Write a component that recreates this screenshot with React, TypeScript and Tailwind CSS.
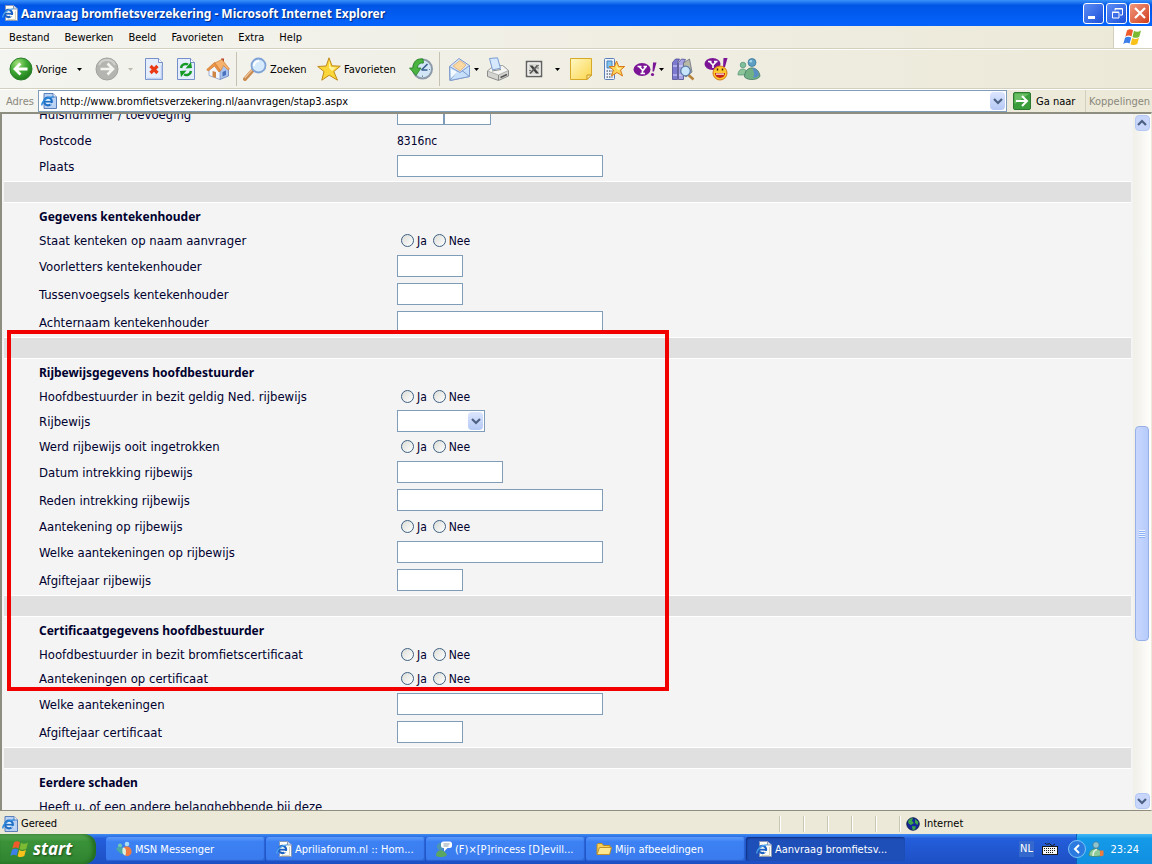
import React from "react";

type IconProps = { className?: string };

const IePage: React.FC<IconProps> = ({ className = "size-4" }) => (
  <svg viewBox="0 0 16 16" className={className} aria-hidden="true">
    <path d="M3.500 .5h8l4 3.500v11.500h-12z" fill="#fdfdf8" stroke="#8b98b5" />
    <path d="M11.500 .5v3.500h4" fill="#d6dff0" stroke="#8b98b5" />
    <path d="M13.500 6v8.500h-8" fill="none" stroke="#d9d4bd" />
    <circle cx="6.500" cy="8.500" r="3.600" fill="none" stroke="#1c62c4" strokeWidth="2.200" />
    <path d="M3.500 8.700h6.500" stroke="#1c62c4" strokeWidth="1.800" />
    <path d="M8 10h4v1.500H8z" fill="#fdfdf8" />
    <path d="M.8 12.500C.2 9 6 3.500 11.500 3.800" fill="none" stroke="#4fa3ea" strokeWidth="1.300" />
  </svg>
);

const IeBlue: React.FC<IconProps> = ({ className = "size-4" }) => (
  <svg viewBox="0 0 16 16" className={className} aria-hidden="true">
    <path d="M3 .5h9l3.500 3.500v11.500H3z" fill="#b9d2f4" stroke="#5a7fb8" />
    <path d="M12 .5V4h3.500" fill="#eef5ff" stroke="#5a7fb8" />
    <circle cx="7" cy="8.500" r="3.800" fill="#e4f1ff" stroke="#1f6fc4" strokeWidth="2.200" />
    <path d="M4 8.700h6.500" stroke="#1f6fc4" strokeWidth="1.700" />
    <path d="M9 10.200h3.500v1.300H9z" fill="#d5e6fb" />
    <path d="M.8 12.500C.5 8.500 6 3.500 12.500 4" fill="none" stroke="#2d8ade" strokeWidth="1.400" />
  </svg>
);

const WindowsFlag: React.FC<IconProps> = ({ className = "size-5" }) => (
  <svg viewBox="0 0 20 18" className={className} aria-hidden="true">
    <path d="M4 2.500C6 1 8 1 10 2.300L8.500 8.500C6.500 7.300 4.500 7.300 2.300 8.700z" fill="#ee5a2a" />
    <path d="M11 2.800c2 1.200 4.500 1.200 7-.3l-1.700 6.200c-2.300 1.500-4.800 1.500-6.800.3z" fill="#7cba34" />
    <path d="M2 9.800c2-1.400 4.200-1.400 6.200-.2L6.600 15.600C4.600 14.400 2.500 14.500.3 15.900z" fill="#3c7fe8" />
    <path d="M9.200 10.100c2 1.200 4.500 1.200 6.800-.3l-1.700 6.200c-2.300 1.500-4.700 1.400-6.700.2z" fill="#f8c11c" />
  </svg>
);

const BackIcon = () => (
  <svg viewBox="0 0 24 24" className="size-6 shrink-0" aria-hidden="true">
    <defs>
      <radialGradient id="back" cx="35%" cy="25%" r="80%">
        <stop offset="0" stopColor="#a4e07c" />
        <stop offset=".5" stopColor="#3fa935" />
        <stop offset="1" stopColor="#1c7a1b" />
      </radialGradient>
    </defs>
    <circle cx="12" cy="12" r="11" fill="url(#back)" stroke="#2b7f2a" />
    <path d="M11.500 6.500L6 12l5.500 5.500M6.500 12H18.500" fill="none" stroke="#fff" strokeWidth="2.800" />
  </svg>
);

const ForwardIcon = () => (
  <svg viewBox="0 0 24 24" className="size-6 shrink-0" aria-hidden="true">
    <circle cx="12" cy="12" r="11" fill="#b4b4b1" stroke="#a2a29e" />
    <path d="M4 8a9 9 0 0 1 16 0" fill="none" stroke="#d0d0cd" strokeWidth="2" />
    <path d="M12.500 6.500L18 12l-5.500 5.500M17.500 12H5.500" fill="none" stroke="#f4f4f0" strokeWidth="2.600" />
  </svg>
);

const StopIcon = () => (
  <svg viewBox="0 0 24 24" className="size-6" aria-hidden="true">
    <path d="M3.500 1.500h13l4 4v17h-17z" fill="#e5eefd" stroke="#7590c8" />
    <path d="M16.500 1.500v4h4" fill="#fff" stroke="#7590c8" />
    <path d="M19.500 8v13.500H5" fill="none" stroke="#bdd0f3" strokeWidth="1.500" />
    <path d="M8.500 9l7 7M15.500 9l-7 7" stroke="#ea3a16" strokeWidth="3.200" />
  </svg>
);

const RefreshIcon = () => (
  <svg viewBox="0 0 24 24" className="size-6" aria-hidden="true">
    <path d="M3.500 1.500h13l4 4v17h-17z" fill="#e5eefd" stroke="#7590c8" />
    <path d="M16.500 1.500v4h4" fill="#fff" stroke="#7590c8" />
    <path d="M7 11c.5-3.500 4-5 7-3.500" fill="none" stroke="#149a25" strokeWidth="2.500" />
    <path d="M11.500 11.500l6.500-.5-1-6z" fill="#149a25" />
    <path d="M17 14c-.5 3.500-4 5-7 3.500" fill="none" stroke="#149a25" strokeWidth="2.500" />
    <path d="M12.500 13.500l-6.500.5 1 6z" fill="#149a25" />
  </svg>
);

const HomeIcon = () => (
  <svg viewBox="0 0 24 24" className="size-6" aria-hidden="true">
    <path d="M15 1.500h3v7h-3z" fill="#b8452c" />
    <path d="M13 13l5-6 4.500 5v7L14 22.500z" fill="#a9c2ee" stroke="#6583bd" strokeWidth=".8" />
    <path d="M3 12.500L8.500 8l5.500 6v8.500L3 18.500z" fill="#f3f7ff" stroke="#8aa0cc" strokeWidth=".8" />
    <path d="M8.500 6L16 2.500l7.500 9.500-1.500 1-4.500-4.500L14.500 14z" fill="#f6b26c" stroke="#cf8136" strokeWidth=".7" />
    <path d="M.8 12.500L8.500 5.500l6 8.500-1.500 1L8.500 9 2.200 14z" fill="#ee9544" stroke="#c8742c" strokeWidth=".7" />
    <path d="M6.500 14l3.500 1v6L6.500 19.800z" fill="#cf8747" />
    <path d="M16.500 15l3.500-1.500v4.500l-3.500 1.500z" fill="#4871bd" />
  </svg>
);

const SearchIcon = () => (
  <svg viewBox="0 0 24 24" className="size-6 shrink-0" aria-hidden="true">
    <path d="M2 22l8-9" stroke="#c98a50" strokeWidth="4" strokeLinecap="round" />
    <path d="M1.800 21l7.500-8.500" stroke="#f0c193" strokeWidth="1.200" />
    <circle cx="15.500" cy="8.500" r="7" fill="#d5eafc" stroke="#7fa3d6" strokeWidth="1.800" />
    <path d="M11 9a4.800 4.800 0 0 1 5-5" fill="none" stroke="#fff" strokeWidth="2" />
  </svg>
);

const Star: React.FC<IconProps> = ({ className = "size-6 shrink-0" }) => (
  <svg viewBox="0 0 24 24" className={className} aria-hidden="true">
    <path d="M12 .8l3 8 8.300.4-6.500 5.300 3.700 8.700-8.300-5-7.400 5 2.200-8.700L.7 9.500 9.200 9z" fill="#fbd63a" stroke="#bf8a1a" />
    <path d="M12 4l1.800 6 5.500.5-4.500 3.500-2.800-3z" fill="#fff3a0" />
  </svg>
);

const HistoryIcon = () => (
  <svg viewBox="0 0 24 24" className="size-6" aria-hidden="true">
    <circle cx="13.500" cy="12" r="9.500" fill="#d2e6f5" stroke="#8d9aa8" strokeWidth="2" />
    <path d="M12.500 13l6-6M12.500 13h6" stroke="#395e8d" strokeWidth="1.600" />
    <path d="M13.500 5v1.500M20 12.500h1M13.500 18.500v1.500" stroke="#6f87a0" />
    <path d="M14 2C7.500 1 4 5 4 11H.5L7 18.500 12 11H8.500c0-3 2-5.500 6-5z" fill="#4bb33f" stroke="#237d24" strokeWidth=".8" />
  </svg>
);

const MailIcon = () => (
  <svg viewBox="0 0 24 24" className="size-6" aria-hidden="true">
    <path d="M1.500 9.500L11 1.500l10.500 7v11L2 23.500z" fill="#d6e5fa" stroke="#7f9bcb" />
    <path d="M5 9l7-5.500L18 8l-6 6z" fill="#fbd9a2" stroke="#dba76b" strokeWidth=".7" />
    <path d="M1.500 9.500L12 15.500l9.500-7v11L2 23.500z" fill="#c6e0fb" stroke="#7f9bcb" />
    <path d="M2 23l7.500-9M21.500 19.500L14 13.500" fill="none" stroke="#7f9bcb" />
    <path d="M3 12l6.500 3L3 21z" fill="#f2f9ff" />
  </svg>
);

const PrinterIcon = () => (
  <svg viewBox="0 0 24 24" className="size-6" aria-hidden="true">
    <path d="M1.500 14l5-4 10-1.500 6 5v5.500l-10 4.500-11-4z" fill="#d4d4d0" stroke="#8b8b8b" />
    <path d="M1.500 14l11 4 10-4.500-6-5-10 1.500z" fill="#f5f5f3" stroke="#9a9a9a" strokeWidth=".7" />
    <path d="M3.500 1.500L11.500 .8l3 10.500-8 1.500z" fill="#d6e8fd" stroke="#7a9cd0" />
    <path d="M6 14l9-1.500" stroke="#8b8b8b" />
    <path d="M12.500 18v5" stroke="#8b8b8b" />
    <path d="M14.500 20.500l6.500-3" stroke="#555" strokeWidth="1.500" />
  </svg>
);

const ExcelIcon = () => (
  <svg viewBox="0 0 24 24" className="size-6" aria-hidden="true">
    <rect x="4.500" y="4.500" width="15" height="15" fill="#d9d9d4" stroke="#626262" strokeWidth="1.500" />
    <path d="M6 6h12v12H6z" fill="none" stroke="#f7f7f4" />
    <path d="M7.500 8.500h3l6.500 8h-3z" fill="#3f3f3f" />
    <path d="M15.500 8.500L8 16.500" stroke="#5a5a5a" strokeWidth="1.800" />
    <path d="M14 8.500h3M14.500 11h2.500M7 13.500h2" stroke="#777" />
  </svg>
);

const NoteIcon = () => (
  <svg viewBox="0 0 24 24" className="size-6" aria-hidden="true">
    <defs>
      <linearGradient id="note" x1="0" y1="0" x2="1" y2="1">
        <stop offset="0" stopColor="#fff8c4" />
        <stop offset="1" stopColor="#fbd54c" />
      </linearGradient>
    </defs>
    <path d="M1.500 1.500h21V18L18 22.500H1.500z" fill="url(#note)" stroke="#d8a926" />
    <path d="M22.500 18H18v4.500z" fill="#fff0a0" stroke="#c8921c" />
  </svg>
);

const PhoneStarIcon = () => (
  <svg viewBox="0 0 24 24" className="size-6" aria-hidden="true">
    <rect x="2.500" y="1.500" width="10" height="21" rx="1" fill="#edf3fc" stroke="#5b7fb6" />
    <path d="M5 4h5v7H5z" fill="#7fc3ef" stroke="#4b82b8" />
    <path d="M4.500 14h6M4.500 17h6M4.500 20h6" stroke="#69727f" strokeWidth="1.500" strokeDasharray="1.500 1" />
    <path d="M14.500 4l2.200 5.500h6L18.500 13l2 6-5.500-3.500L9.500 19l2-6L7 9.500h5.500z" fill="#fcd65a" stroke="#d97a16" />
    <path d="M14.500 7l1.500 4 3.500.2-3 2-2-2z" fill="#fff3a8" />
  </svg>
);

const YahooIcon = () => (
  <svg viewBox="0 0 24 24" className="size-6" aria-hidden="true">
    <ellipse cx="9" cy="12.500" rx="8.500" ry="6.500" fill="#7b1595" />
    <path d="M4.500 9.500h4M10.500 9.500h3.500M6 9.500l4 4 3-4M9.500 13.500v3M7.500 16.500h4.500" fill="none" stroke="#fff" strokeWidth="1.700" />
    <path d="M20 5.500h3.500l-2.500 9h-1.500z" fill="#7b1595" />
    <circle cx="19.500" cy="17.500" r="1.600" fill="#7b1595" />
  </svg>
);

const BooksIcon = () => (
  <svg viewBox="0 0 24 24" className="size-6" aria-hidden="true">
    <path d="M1.500 5.500l3-3.500h4l-2 3.500v17h-5z" fill="#7d7bd0" stroke="#4c4a91" strokeWidth=".8" />
    <path d="M7.500 5.500L10.500 2l4 .5-2 3.500v16.500h-5z" fill="#a5a3e3" stroke="#4c4a91" strokeWidth=".8" />
    <path d="M12.500 6l6-4 2.500 13-6 5-2.500-2z" fill="#b9b9a8" stroke="#696f7d" strokeWidth=".8" />
    <path d="M2 9h4M2 18h4M8 9h4M8 18h4" stroke="#e0dcff" />
    <path d="M17.500 18l5 4.500" stroke="#b8823a" strokeWidth="2.500" />
    <circle cx="14.500" cy="14" r="4.800" fill="#c8e5fb" stroke="#5a7ca8" strokeWidth="1.300" />
  </svg>
);

const YahooMessengerIcon = () => (
  <svg viewBox="0 0 24 24" className="size-6" aria-hidden="true">
    <ellipse cx="8.500" cy="7" rx="8" ry="6" fill="#7b1595" />
    <path d="M4 4.500h3.500M10 4.500h3.500M5.500 4.500L9 8l3.500-3.500M9 8v3" fill="none" stroke="#fff" strokeWidth="1.600" />
    <path d="M19.500 1H23.500l-2.500 9h-2z" fill="#7b1595" />
    <circle cx="16" cy="16" r="7" fill="#fdc92c" stroke="#d5761a" />
    <path d="M11 16h10c0 6.500-10 6.500-10 0z" fill="#c82118" />
    <path d="M12 16.500h8v1.200h-8z" fill="#fff" />
    <path d="M13.500 11.500v2M18.500 11.500v2" stroke="#442200" strokeWidth="1.500" />
  </svg>
);

const PeopleIcon: React.FC<IconProps> = ({ className = "size-6" }) => (
  <svg viewBox="0 0 24 24" className={className} aria-hidden="true">
    <circle cx="6" cy="8" r="2.800" fill="#7fbf9a" stroke="#4e8e7a" strokeWidth=".7" />
    <path d="M1 18c0-8 9-8 10 0z" fill="#8cc59a" stroke="#528f72" strokeWidth=".7" />
    <circle cx="15" cy="5.500" r="4" fill="#5f9fc4" stroke="#34718f" strokeWidth=".7" />
    <path d="M7.500 20c0-12 14-12 15.500-1-1 4-12 5-15.500 1z" fill="#72b184" stroke="#39705c" strokeWidth=".7" />
    <path d="M15 11c4 0 6.500 3 7 7-2 3-5 3-6 2.500 2-3 1-6-1-9.500z" fill="#5b8fc4" />
    <circle cx="13.800" cy="4.300" r="1.300" fill="#a9d6ea" />
  </svg>
);

const TrayPersonIcon = () => (
  <svg viewBox="0 0 16 16" className="ml-[2px] size-4" aria-hidden="true">
    <circle cx="8" cy="4" r="3.200" fill="#8fc3cf" stroke="#3d7690" strokeWidth=".7" />
    <path d="M1 14.500C1 6 13 5.500 14 14c-3 2-10 2-13 .5z" fill="#8ecb9a" stroke="#3f7d63" strokeWidth=".7" />
    <path d="M5 15c0-4 1-6 4-6.500" fill="none" stroke="#e4f2e6" strokeWidth="1.500" />
    <path d="M12 9.500h3.500v5l-3.500 1z" fill="#ef7a3c" />
  </svg>
);

const MsnIcon: React.FC<IconProps> = ({ className = "size-4 shrink-0" }) => (
  <svg viewBox="0 0 16 16" className={className} aria-hidden="true">
    <circle cx="4" cy="4.500" r="2" fill="#73c9ad" />
    <path d="M0 8c2-3 5-3 8 0v5c-3 1-5-2-8-5z" fill="#48a7a9" />
    <circle cx="11" cy="3" r="2.300" fill="#a8dcf7" />
    <path d="M8 6c5-1.500 8 1 7.500 6-2 4-6 4-7.500 1z" fill="#ef7b42" />
    <path d="M7 6.500c3 0 3.500 3 2.500 8C6.500 14 5.500 10 7 6.500z" fill="#dceedd" />
  </svg>
);

const ChatIcon = () => (
  <svg viewBox="0 0 16 16" className="size-4 shrink-0" aria-hidden="true">
    <circle cx="4.500" cy="5.500" r="3.500" fill="#4f97ae" />
    <path d="M0 15c0-7 8-8 11-1-2 2.500-8 2.500-11 1z" fill="#5ba660" />
    <rect x="5" y=".5" width="11" height="6.500" rx="2.500" fill="#fff" />
    <path d="M8 6.500v4l4-4z" fill="#fff" />
    <path d="M7.500 3h6M7.500 5h5" stroke="#8b9ba8" />
  </svg>
);

const FolderIcon = () => (
  <svg viewBox="0 0 16 16" className="size-4 shrink-0" aria-hidden="true">
    <path d="M1 13V3.500l1-1h4l1.500 2H14V6" fill="#f8cf5a" stroke="#b98a20" />
    <path d="M1 13.500L3.500 6.500h12L13.500 13.500z" fill="#fde88f" stroke="#c0942b" />
  </svg>
);

const GlobeIcon = () => (
  <svg viewBox="0 0 14 14" className="size-[14px]" aria-hidden="true">
    <circle cx="7" cy="7" r="6.200" fill="#14279c" stroke="#0b1a4a" />
    <path d="M2 4c1.500-2 3-3 5-3L6 4 8 6 5 8 2.500 6.500zM9 2l3.500 3-1 3L9 6zM6 9l4 .5-1 3-2.500.5z" fill="#3ca549" />
  </svg>
);

const KeyboardIcon = () => (
  <svg viewBox="0 0 16 12" className="h-3 w-4" aria-hidden="true">
    <path d="M3 0q1 2 3 1t3 1 4-1" fill="none" stroke="#1a1a1a" />
    <rect x=".5" y="3.500" width="15" height="8" fill="#f4f4f4" stroke="#1a1a1a" />
    <path d="M2 5.500h12M2 7.500h12M4 9.500h8" stroke="#1a1a1a" strokeDasharray="1 1" />
  </svg>
);

const Chevron: React.FC<{ up?: boolean }> = ({ up }) => (
  <svg viewBox="0 0 10 8" className={up ? "h-2 w-[10px] rotate-180" : "h-2 w-[10px]"} aria-hidden="true">
    <path d="M1 2l4 4 4-4" fill="none" stroke="#4d6185" strokeWidth="2.200" />
  </svg>
);

const DropArrow: React.FC<{ className: string; label: string; muted?: boolean }> = ({
  className,
  label,
  muted,
}) => (
  <button type="button" aria-label={label} className={`flex h-6 items-center justify-center ${className}`}>
    <svg viewBox="0 0 5 3" className="h-[3px] w-[5px]" aria-hidden="true">
      <path d="M0 0h5L2.500 3z" fill={muted ? "#bdbab0" : "#000"} />
    </svg>
  </button>
);

const ToolButton: React.FC<{ label: string; className?: string; children: React.ReactNode }> = ({
  label,
  className = "",
  children,
}) => (
  <button type="button" aria-label={label} className={`size-6 shrink-0 ${className}`}>
    {children}
  </button>
);

const Separator: React.FC<IconProps> = ({ className = "" }) => (
  <div className={`h-[34px] w-px bg-[#c5c2b3] ${className}`} />
);

const menuItems = ["Bestand", "Bewerken", "Beeld", "Favorieten", "Extra", "Help"];

const TitleBar = () => (
  <header className="flex h-[26px] shrink-0 items-center bg-linear-to-b from-[#3a92fb] from-0% via-[#0055e5] via-20% to-[#0462fb] to-90% pr-[2px] pl-[2px]">
    <IePage />
    <h1 className="ml-[3px] flex-1 pt-px font-['Noto_Sans',sans-serif] text-[12px] font-bold text-white [text-shadow:1px_1px_1px_#0a2a80]">
      Aanvraag bromfietsverzekering - Microsoft Internet Explorer
    </h1>
    <div className="flex gap-[2px]">
      <button type="button" aria-label="Minimaliseren" className="flex size-[21px] items-end rounded-[3px] border border-white bg-linear-to-br from-[#5c8cf5] to-[#1c4fd8] pb-1 pl-1">
        <span className="h-[3px] w-[7px] bg-white" />
      </button>
      <button type="button" aria-label="Verkleinen" className="flex size-[21px] items-center justify-center rounded-[3px] border border-white bg-linear-to-br from-[#5c8cf5] to-[#1c4fd8]">
        <svg viewBox="0 0 12 12" className="size-3" fill="none" stroke="#fff" aria-hidden="true">
          <path d="M4 3.500V1.500h7.500V8H9M4 2h7" />
          <path d="M1.500 5.500H8V11H1.500zM1 5h7" />
        </svg>
      </button>
      <button type="button" aria-label="Sluiten" className="flex size-[21px] items-center justify-center rounded-[3px] border border-white bg-linear-to-br from-[#f0977c] to-[#d13a15]">
        <svg viewBox="0 0 12 12" className="size-3" aria-hidden="true">
          <path d="M1 1l10 10M11 1L1 11" stroke="#fff" strokeWidth="2.200" />
        </svg>
      </button>
    </div>
  </header>
);

const MenuBar = () => (
  <nav className="flex h-[23px] shrink-0 border-b border-[#d3d0c0]">
    <div className="flex flex-1 items-center gap-[15px] pt-[2px] pl-[9px]">
      {menuItems.map((item) => (
        <button key={item} type="button">
          {item}
        </button>
      ))}
    </div>
    <div className="flex w-[39px] items-center justify-center border-l border-[#d3d0c0] bg-white">
      <WindowsFlag className="h-[18px] w-5" />
    </div>
  </nav>
);

const Toolbar = () => (
  <div className="flex h-10 shrink-0 items-center border-t border-b border-t-white border-b-[#d3d0c0] pl-[9px]">
    <button type="button" className="flex w-[61px] shrink-0 items-center gap-[3px]">
      <BackIcon />
      <span className="pt-px">Vorige</span>
    </button>
    <DropArrow label="Vorige pagina's" className="w-[18px]" />
    <ToolButton label="Volgende" className="ml-[7px]"><ForwardIcon /></ToolButton>
    <DropArrow label="Volgende pagina's" className="w-[22px]" muted />
    <ToolButton label="Stoppen" className="ml-px"><StopIcon /></ToolButton>
    <ToolButton label="Vernieuwen" className="ml-2"><RefreshIcon /></ToolButton>
    <ToolButton label="Startpagina" className="ml-2"><HomeIcon /></ToolButton>
    <Separator className="ml-[6px]" />
    <button type="button" className="ml-[6px] flex w-[66px] shrink-0 items-center gap-[3px]">
      <SearchIcon />
      <span className="pt-px">Zoeken</span>
    </button>
    <button type="button" className="ml-2 flex w-[83px] shrink-0 items-center gap-[3px]">
      <Star />
      <span className="pt-px">Favorieten</span>
    </button>
    <ToolButton label="Geschiedenis" className="ml-[9px]"><HistoryIcon /></ToolButton>
    <Separator className="ml-[6px]" />
    <ToolButton label="E-mail" className="ml-2"><MailIcon /></ToolButton>
    <DropArrow label="E-mailopties" className="w-2" />
    <ToolButton label="Afdrukken" className="ml-[6px]"><PrinterIcon /></ToolButton>
    <ToolButton label="Bewerken met Excel" className="ml-3"><ExcelIcon /></ToolButton>
    <DropArrow label="Bewerkingsopties" className="ml-[6px] w-[10px]" />
    <ToolButton label="Notitie" className="ml-[7px]"><NoteIcon /></ToolButton>
    <ToolButton label="Mobiel" className="ml-[9px]"><PhoneStarIcon /></ToolButton>
    <ToolButton label="Yahoo" className="ml-[7px]"><YahooIcon /></ToolButton>
    <DropArrow label="Yahoo-opties" className="w-2" />
    <ToolButton label="Onderzoek" className="ml-[6px]"><BooksIcon /></ToolButton>
    <ToolButton label="Yahoo Messenger" className="ml-[9px]"><YahooMessengerIcon /></ToolButton>
    <ToolButton label="Messenger" className="ml-[9px]"><PeopleIcon /></ToolButton>
  </div>
);

const AddressBar = () => (
  <div className="flex h-[23px] shrink-0 border-t border-white">
    <label htmlFor="adres" className="flex w-[38px] items-center pt-px pl-[6px] text-[#8a887c]">
      Adres
    </label>
    <div className="flex h-[22px] flex-1 items-center border border-[#7f9db9] bg-white pl-[2px] pr-px">
      <IeBlue className="size-4" />
      <input id="adres" type="text" defaultValue="http://www.bromfietsverzekering.nl/aanvragen/stap3.aspx" className="min-w-0 flex-1 bg-transparent pt-[2px] pl-[3px] outline-none" />
      <button type="button" aria-label="Adreslijst" className="flex h-[18px] w-[15px] items-center justify-center rounded-sm bg-linear-to-b from-[#dbe5fe] to-[#b5c9f5]">
        <Chevron />
      </button>
    </div>
    <button type="button" className="flex w-[78px] items-center gap-[5px] pl-[6px]">
      <svg viewBox="0 0 18 18" className="size-[18px]" aria-hidden="true">
        <rect x=".5" y=".5" width="17" height="17" rx="1.500" fill="#3a9d3b" stroke="#2c7a30" />
        <path d="M1.500 1.500h15L1.500 12z" fill="#69bd62" />
        <path d="M3 9h11M9 4l5 5-5 5" fill="none" stroke="#fff" strokeWidth="2" />
      </svg>
      <span className="pt-px">Ga naar</span>
    </button>
    <div className="flex w-[67px] items-center border-l border-[#d3d0c0] pt-px pl-[3px] text-[#8a887c]">Koppelingen</div>
  </div>
);

type Field = {
  id: string;
  label: string;
  kind: "radio" | "text" | "select" | "value" | "double" | "none";
  size?: "sm" | "md" | "lg";
  value?: string;
};

type Section = { title?: string; fields: Field[] };

const sections: Section[] = [
  {
    fields: [
      { id: "huisnummer", label: "Huisnummer / toevoeging", kind: "double" },
      { id: "postcode", label: "Postcode", kind: "value", value: "8316nc" },
      { id: "plaats", label: "Plaats", kind: "text", size: "lg" },
    ],
  },
  {
    title: "Gegevens kentekenhouder",
    fields: [
      { id: "kenteken-aanvrager", label: "Staat kenteken op naam aanvrager", kind: "radio" },
      { id: "voorletters", label: "Voorletters kentekenhouder", kind: "text", size: "sm" },
      { id: "tussenvoegsels", label: "Tussenvoegsels kentekenhouder", kind: "text", size: "sm" },
      { id: "achternaam", label: "Achternaam kentekenhouder", kind: "text", size: "lg" },
    ],
  },
  {
    title: "Rijbewijsgegevens hoofdbestuurder",
    fields: [
      { id: "geldig-rijbewijs", label: "Hoofdbestuurder in bezit geldig Ned. rijbewijs", kind: "radio" },
      { id: "rijbewijs", label: "Rijbewijs", kind: "select" },
      { id: "ingetrokken", label: "Werd rijbewijs ooit ingetrokken", kind: "radio" },
      { id: "datum-intrekking", label: "Datum intrekking rijbewijs", kind: "text", size: "md" },
      { id: "reden-intrekking", label: "Reden intrekking rijbewijs", kind: "text", size: "lg" },
      { id: "aantekening", label: "Aantekening op rijbewijs", kind: "radio" },
      { id: "welke-rijbewijs", label: "Welke aantekeningen op rijbewijs", kind: "text", size: "lg" },
      { id: "afgifte-rijbewijs", label: "Afgiftejaar rijbewijs", kind: "text", size: "sm" },
    ],
  },
  {
    title: "Certificaatgegevens hoofdbestuurder",
    fields: [
      { id: "certificaat", label: "Hoofdbestuurder in bezit bromfietscertificaat", kind: "radio" },
      { id: "aantekening-certificaat", label: "Aantekeningen op certificaat", kind: "radio" },
      { id: "welke-certificaat", label: "Welke aantekeningen", kind: "text", size: "lg" },
      { id: "afgifte-certificaat", label: "Afgiftejaar certificaat", kind: "text", size: "sm" },
    ],
  },
  {
    title: "Eerdere schaden",
    fields: [{ id: "schaden", label: "Heeft u, of een andere belanghebbende bij deze", kind: "none" }],
  },
];

const inputWidths = { sm: "w-[66px]", md: "w-[106px]", lg: "w-[206px]" };
const rowHeights = {
  radio: "h-6",
  value: "h-6",
  none: "h-6",
  select: "h-[26px]",
  text: "h-7",
  double: "h-7",
};
const inputClass = "h-[22px] border border-[#7f9db9] bg-white px-1 outline-none";
const labelClass = "pt-px text-[13px] leading-4";

const Control: React.FC<{ field: Field }> = ({ field }) => {
  switch (field.kind) {
    case "radio":
      return (
        <div role="radiogroup" aria-labelledby={`${field.id}-label`} className="flex items-center pl-1">
          {["Ja", "Nee"].map((option) => (
            <label key={option} className="mr-[6px] flex items-center gap-[3px]">
              <input
                type="radio"
                name={field.id}
                value={option}
                className="size-[13px] appearance-none rounded-full border border-[#3c5f82] bg-linear-to-br from-[#dcdcd7] to-white checked:bg-[#21a121]"
              />
              <span className="pt-[2px]">{option}</span>
            </label>
          ))}
        </div>
      );
    case "text":
      return <input id={field.id} type="text" className={`${inputClass} ${inputWidths[field.size ?? "lg"]}`} />;
    case "double":
      return (
        <div className="flex">
          <input id={field.id} type="text" className={`${inputClass} w-[47px]`} />
          <input type="text" aria-label="Toevoeging" className={`${inputClass} w-[47px]`} />
        </div>
      );
    case "select":
      return (
        <div className="relative flex w-[88px]">
          <select id={field.id} className={`${inputClass} w-full appearance-none`}>
            <option value=""></option>
            <option value="A">A</option>
            <option value="B">B</option>
          </select>
          <span className="pointer-events-none absolute top-[2px] right-[2px] flex h-[18px] w-[15px] items-center justify-center rounded-sm bg-linear-to-b from-[#dbe5fe] to-[#b5c9f5]">
            <Chevron />
          </span>
        </div>
      );
    case "value":
      return <output id={field.id} className="pt-px">{field.value}</output>;
    default:
      return null;
  }
};

const FormSection: React.FC<{ section: Section }> = ({ section }) => (
  <section className="py-[2px] pl-[35px]">
    {section.title && (
      <h2 className="flex h-6 items-center pt-[2px] font-['Noto_Sans',sans-serif] font-bold">{section.title}</h2>
    )}
    {section.fields.map((field) => (
      <div key={field.id} className={`grid grid-cols-[358px_1fr] items-center ${rowHeights[field.kind]}`}>
        {field.kind === "radio" || field.kind === "none" ? (
          <span id={`${field.id}-label`} className={labelClass}>{field.label}</span>
        ) : (
          <label htmlFor={field.id} className={labelClass}>{field.label}</label>
        )}
        <Control field={field} />
      </div>
    ))}
  </section>
);

const ScrollBar = () => (
  <div className="flex w-[18px] shrink-0 flex-col items-center bg-linear-to-r from-[#f0efe8] to-[#fefefc] py-px">
    <button type="button" aria-label="Omhoog" className="flex h-4 w-[15px] items-center justify-center rounded-sm border border-[#b4c8f6] bg-[#c8d6fb]">
      <Chevron up />
    </button>
    <div className="flex w-full flex-1 flex-col items-center">
      <div className="basis-[295px]" />
      <div className="flex h-[215px] w-[14px] flex-col items-center justify-center gap-px rounded-sm border border-[#98b0e8] bg-linear-to-r from-[#c9d7fd] to-[#b6cbfb]">
        {[0, 1, 2, 3].map((i) => (
          <span key={i} className="h-px w-[6px] bg-[#eef4fe] shadow-[0_1px_0_#8cb0f8]" />
        ))}
      </div>
    </div>
    <button type="button" aria-label="Omlaag" className="flex h-4 w-[15px] items-center justify-center rounded-sm border border-[#b4c8f6] bg-[#c8d6fb]">
      <Chevron />
    </button>
  </div>
);

const StatusBar = () => (
  <footer className="flex h-[23px] shrink-0 items-center bg-[#ece9d8] pt-[2px] pl-[2px]">
    <IeBlue className="size-4" />
    <span className="flex-1 pt-px pl-[3px]">Gereed</span>
    {[0, 1, 2, 3, 4].map((i) => (
      <span key={i} className="h-4 w-6 border-l border-[#c9c6b5] shadow-[inset_1px_0_0_#fff]" />
    ))}
    <span className="flex h-4 w-[253px] items-center gap-1 border-l border-[#c9c6b5] pl-[6px] shadow-[inset_1px_0_0_#fff]">
      <GlobeIcon />
      <span className="pt-px">Internet</span>
    </span>
  </footer>
);

const tasks = [
  { title: "MSN Messenger", icon: <MsnIcon /> },
  { title: "Apriliaforum.nl :: Hom...", icon: <IePage className="size-4 shrink-0" /> },
  { title: "(F)×[P]rincess [D]evill...", icon: <ChatIcon /> },
  { title: "Mijn afbeeldingen", icon: <FolderIcon /> },
  { title: "Aanvraag bromfietsv...", icon: <IePage className="size-4 shrink-0" />, active: true },
];

const TaskBar = () => (
  <div className="flex h-[30px] shrink-0 bg-linear-to-b from-[#3f8cf3] from-0% via-[#245edb] via-15% to-[#1d4fc4] text-white">
    <button type="button" className="flex w-24 items-center gap-[3px] rounded-r-xl bg-linear-to-b from-[#5eac5a] from-0% via-[#3a9238] via-25% to-[#2f8430] pl-[10px] font-['Open_Sans',sans-serif] text-[17px] leading-6 font-bold italic shadow-[inset_-3px_0_4px_#22691f] [text-shadow:1px_1px_2px_#1c4a1a]">
      <WindowsFlag className="h-[18px] w-5" />
      start
    </button>
    <div className="flex flex-1 items-center pl-[10px]">
      {tasks.map((task) => (
        <button
          key={task.title}
          type="button"
          className={`mr-px flex h-6 w-[159px] items-center gap-[3px] rounded-[3px] pl-[10px] text-left whitespace-nowrap ${
            task.active
              ? "bg-[#1e4fb8] shadow-[inset_1px_1px_2px_#0f3080]"
              : "bg-linear-to-b from-[#5c9bfb] from-0% via-[#3c81f3] via-20% to-[#3a7bee] shadow-[inset_-1px_-1px_1px_#2a60cc]"
          }`}
        >
          {task.icon}
          <span className="pt-[2px]">{task.title}</span>
        </button>
      ))}
    </div>
    <div className="flex items-center gap-2 pr-[10px]">
      <span className="bg-[#3568cc] px-px">NL</span>
      <KeyboardIcon />
    </div>
    <div className="flex w-[84px] shrink-0 items-center">
      <button type="button" aria-label="Verborgen pictogrammen" className="z-10 -mr-[10px] flex size-[18px] shrink-0 items-center justify-center rounded-full border border-[#7fc4f8] bg-[#2a7ae0]">
        <svg viewBox="0 0 10 10" className="size-[10px]" aria-hidden="true">
          <path d="M7 1L3 5l4 4" fill="none" stroke="#fff" strokeWidth="2" />
        </svg>
      </button>
      <div className="flex h-full flex-1 items-center border-l border-[#0f5fb8] bg-linear-to-b from-[#3fb8f8] from-0% via-[#139ae8] via-15% to-[#128fe0] pl-[9px]">
        <TrayPersonIcon />
        <time className="flex-1 pt-px pr-[13px] text-right">23:24</time>
      </div>
    </div>
  </div>
);

export default function App() {
  return (
    <div className="flex h-screen flex-col overflow-hidden bg-linear-to-r from-[#f4f4f0] to-[#ece9d8] font-['DejaVu_Sans_Condensed','DejaVu_Sans',sans-serif] text-[11px] leading-4 text-black">
      <TitleBar />
      <MenuBar />
      <Toolbar />
      <AddressBar />
      <div className="flex min-h-0 flex-1 border-t-2 border-r border-b border-l-2 border-t-[#8d8d80] border-r-[#ece9d8] border-b-[#8d8d80] border-l-[#8d8d80] bg-[#f4f4f4]">
        <main className="relative min-w-0 flex-1 overflow-hidden">
          <form className="-mt-4 mr-[2px] ml-[2px] text-[12px] text-[#00002f]">
            {sections.map((section, i) => (
              <React.Fragment key={section.title ?? "adres"}>
                {i > 0 && <div className="h-5 bg-[#e0e0e0] shadow-[0_-1px_0_#fff,0_1px_0_#fff]" />}
                <FormSection section={section} />
              </React.Fragment>
            ))}
          </form>
          <div className="pointer-events-none absolute top-[216px] left-[5px] h-[361px] w-[662px] border-4 border-[#f20000]" />
        </main>
        <ScrollBar />
      </div>
      <StatusBar />
      <TaskBar />
    </div>
  );
}
